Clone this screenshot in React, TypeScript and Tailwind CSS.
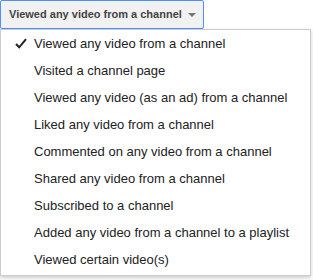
import React from "react";

const options = [
  "Viewed any video from a channel",
  "Visited a channel page",
  "Viewed any video (as an ad) from a channel",
  "Liked any video from a channel",
  "Commented on any video from a channel",
  "Shared any video from a channel",
  "Subscribed to a channel",
  "Added any video from a channel to a playlist",
  "Viewed certain video(s)",
];

const App = () => {
  const selected = 0;

  return (
    <div className="w-[313px] h-[280px] bg-white font-['Liberation_Sans',Arial,sans-serif]">
      {/* trigger */}
      <button className="flex items-center w-[204px] h-[29px] pl-[8px] pr-[7px] border border-[#4d90fe] rounded-[2px] bg-[#f1f1f1] text-[11px] font-bold text-[#444] whitespace-nowrap">
        <span>Viewed any video from a channel</span>
        <span className="ml-auto mt-[1px] w-0 h-0 border-l-[4px] border-r-[4px] border-t-[4px] border-l-transparent border-r-transparent border-t-[#777]" />
      </button>

      {/* menu */}
      <ul className="w-[311px] border border-[#ccc] bg-white shadow-[0_2px_4px_rgba(0,0,0,0.2)] pb-[2px]">
        {options.map((label, i) => (
          <li key={label} className="relative h-[27px] leading-[27px] pl-[33px] text-[13px] text-[#222]">
            {i === selected && (
              <svg className="absolute left-[14px] top-[8px]" width="12" height="11" viewBox="0 0 12 11">
                <path d="M1 6 L4.2 9.3 L11 1.2" fill="none" stroke="#222" strokeWidth="2" />
              </svg>
            )}
            {label}
          </li>
        ))}
      </ul>
    </div>
  );
};

export default App;
